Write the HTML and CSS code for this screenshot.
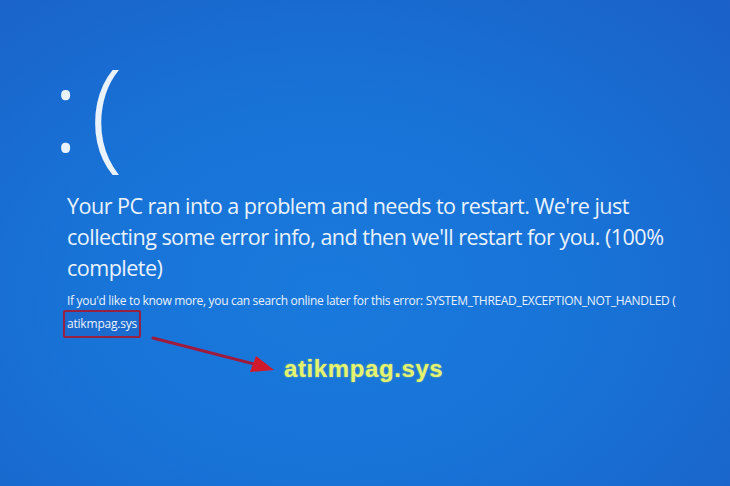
FILE: index.html
```html
<!DOCTYPE html>
<html>
<head>
<meta charset="utf-8">
<link rel="stylesheet" href="styles.css">
</head>
<body>
<div class="screen">
  <div class="content">
    <div class="face"><span class="colon">:</span><span class="paren">(</span></div>
    <p class="msg">Your PC ran into a problem and needs to restart. We're just collecting some error info, and then we'll restart for you. (100% complete)</p>
    <p class="info">If you'd like to know more, you can search online later for this error: SYSTEM_THREAD_EXCEPTION_NOT_HANDLED (</p>
    <div class="code-row"><span class="code">atikmpag.sys</span></div>
  </div>
  <svg class="arrow" width="140" height="50" viewBox="0 0 140 50">
    <line x1="3" y1="4" x2="108" y2="31" stroke="#a01a3c" stroke-width="3" stroke-linecap="round"/>
    <polygon points="124,36 100,38 106,22" fill="#d01a2c"/>
  </svg>
  <div class="callout">atikmpag.sys</div>
</div>
</body>
</html>
```
FILE: styles.css
```css
html, body {
  margin: 0;
  padding: 0;
}
body {
  width: 730px;
  height: 486px;
  overflow: hidden;
}
.screen {
  position: relative;
  width: 730px;
  height: 486px;
  background: radial-gradient(ellipse at 45% 60%, #1a79dc 0%, #1873d7 45%, #1a60c8 100%);
  color: #eaf2fb;
  font-family: "Open Sans", "Noto Sans", sans-serif;
  overflow: hidden;
}
.content {
  padding: 0 0 0 67px;
}
.face {
  display: flex;
  align-items: flex-start;
  height: 190px;
  font-weight: 300;
}
.colon {
  display: block;
  font-size: 114px;
  line-height: 1;
  margin-top: 51px;
  margin-left: -15px;
}
.paren {
  display: block;
  font-size: 120px;
  line-height: 1;
  margin-top: 50px;
  margin-left: 11px;
}
.msg {
  margin: 0;
  width: 600px;
  font-size: 21.6px;
  line-height: 31px;
  letter-spacing: -0.55px;
}
.info {
  margin: 10px 0 0 0;
  font-size: 12px;
  line-height: 16px;
  letter-spacing: -0.32px;
  white-space: nowrap;
}
.code-row {
  margin-top: 1px;
  margin-left: -4px;
}
.code {
  display: inline-block;
  font-size: 12px;
  line-height: 16px;
  letter-spacing: -0.2px;
  padding: 4px 2px 4px 2px;
  border: 2px solid #97213f;
  border-radius: 2px;
  background: rgba(30, 100, 200, 0.6);
}
.arrow {
  position: absolute;
  left: 150px;
  top: 334px;
}
.callout {
  position: absolute;
  left: 284px;
  top: 355px;
  font-family: "Liberation Sans", Arial, sans-serif;
  font-weight: bold;
  font-size: 24px;
  color: #e4f46e;
  text-shadow: 0 0 2px rgba(230, 245, 100, 0.6);
  letter-spacing: 0.6px;
}
```
